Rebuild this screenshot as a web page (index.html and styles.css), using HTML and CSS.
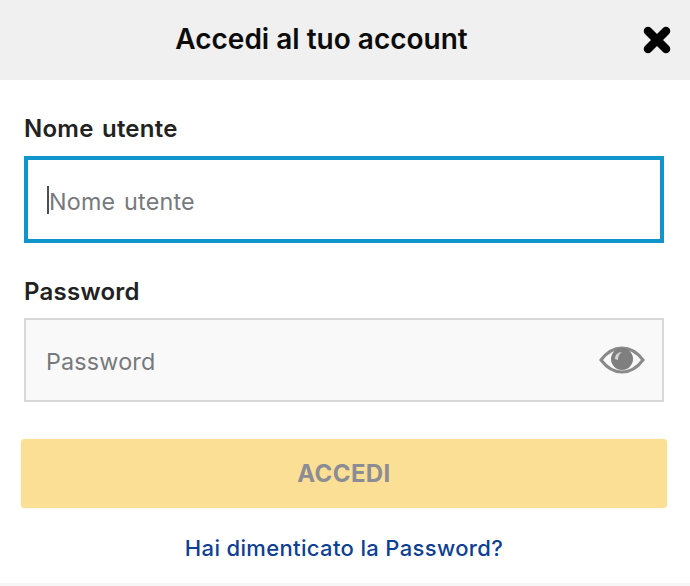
FILE: index.html
```html
<!DOCTYPE html>
<html lang="it">

<head>
    <meta charset="UTF-8">
    <meta name="viewport" content="width=device-width, initial-scale=1.0">
    <title>Accedi</title>
    <link rel="stylesheet" href="styles.css">
</head>

<body>
    <div class="header">
        <div class="title">Accedi al tuo account</div>
        <svg class="close" width="30" height="30" viewBox="0 0 30 30">
            <path d="M6 6L24 24M24 6L6 24" stroke="#000" stroke-width="8.5" stroke-linecap="round" />
        </svg>
    </div>

    <form class="form">
        <label class="label">Nome utente</label>
        <div class="field field-active">
            <span class="caret"></span>
            <input class="input" type="text" placeholder="Nome utente">
        </div>

        <label class="label label-password">Password</label>
        <div class="field field-password">
            <input class="input" type="password" placeholder="Password">
            <svg class="eye" width="46" height="32" viewBox="0 0 46 32">
                <path d="M2 16C8 8 15 4 23 4C31 4 38 8 44 16C38 24 31 28 23 28C15 28 8 24 2 16Z" fill="none" stroke="#8a8a8a" stroke-width="3" />
                <circle cx="23" cy="15" r="11" fill="#7f7f7f" />
                <path d="M16 15C16 11 19 8 23 8C20 10 19 12 19 16Z" fill="#d8d8d8" />
            </svg>
        </div>

        <button class="submit" type="button">ACCEDI</button>
        <a class="forgot" href="#">Hai dimenticato la Password?</a>
    </form>
    <div class="bottom"></div>
</body>

</html>
```

FILE: styles.css
```css
html, body {
    height: 100%;
}

body {
    margin: 0;
    display: flex;
    flex-direction: column;
    background-color: #fff;
    font-family: Inter, "Liberation Sans", sans-serif;
    overflow: hidden;
}

.header {
    display: flex;
    justify-content: center;
    align-items: center;
    height: 80px;
    background-color: #f0f0f0;
    position: relative;
}

.title {
    font-size: 28px;
    font-weight: 600;
    color: #0c0c0c;
    margin-right: 47px;
    margin-bottom: 2px;
}

.close {
    position: absolute;
    right: 18px;
    top: 25px;
}

.form {
    flex: 1;
    display: flex;
    flex-direction: column;
    padding: 0 26px 0 24px;
}

.label {
    margin-top: 34px;
    height: 29px;
    line-height: 29px;
    font-size: 24px;
    font-weight: 600;
    letter-spacing: 0.25px;
    word-spacing: 2px;
    color: #222;
}

.label-password {
    margin-top: 34px;
}

.field {
    display: flex;
    align-items: center;
    box-sizing: border-box;
    margin-top: 13px;
}

.field-active {
    height: 87px;
    border: 4px solid #0f94cb;
    background-color: #fff;
    padding-left: 19px;
}

.field-password {
    height: 84px;
    margin-top: 12px;
    border: 2px solid #d8d8d8;
    background-color: #f9f9f9;
    padding-left: 20px;
    padding-right: 17px;
}

.caret {
    width: 2px;
    height: 28px;
    background-color: #4a4f55;
}

.input {
    flex: 1;
    min-width: 0;
    border: none;
    outline: none;
    padding: 3px 0 0;
    background: transparent;
    font-family: inherit;
    font-size: 23.3px;
    letter-spacing: 0.2px;
    word-spacing: 2px;
    color: #222;
}

.input::placeholder {
    color: #77797c;
    opacity: 1;
}

.submit {
    height: 69px;
    margin: 37px -3px 0;
    border: none;
    border-radius: 4px;
    background-color: #fbdf95;
    box-shadow: 0 0 2px rgba(251, 223, 149, 0.6);
    color: #8c8c94;
    font-family: inherit;
    font-size: 24px;
    font-weight: 700;
    letter-spacing: 0.4px;
}

.forgot {
    margin-top: 27px;
    text-align: center;
    font-size: 22px;
    font-weight: 500;
    letter-spacing: 0.35px;
    color: #0e3f94;
    text-decoration: none;
}

.bottom {
    height: 3px;
    background-color: #f6f6f6;
}
```
